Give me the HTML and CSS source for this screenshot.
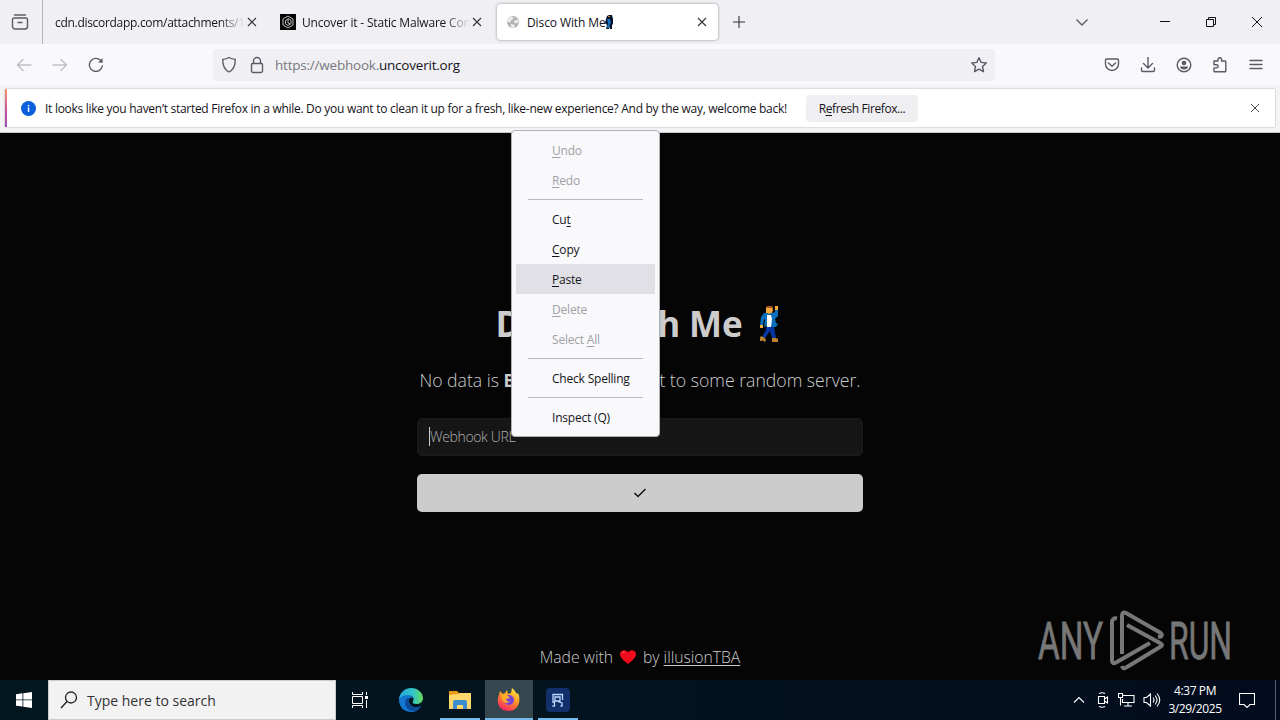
FILE: index.html
```html
<!DOCTYPE html>
<html lang="en">
<head>
    <meta charset="UTF-8">
    <meta name="viewport" content="width=device-width, initial-scale=1.0">
    <title>Disco With Me</title>
    <link rel="stylesheet" href="styles.css">
</head>
<body>
<div class="screen">
    <header class="tabs">
        <div class="view">
            <svg class="icon" width="18" height="18" viewBox="0 0 18 18"><path d="M3.5 2h11M3 5h12a1.5 1.5 0 0 1 1.5 1.5v7A2.5 2.5 0 0 1 14 16H4a2.5 2.5 0 0 1-2.5-2.500v-7A1.5 1.5 0 0 1 3 5zM7 9.5h4"/></svg>
        </div>
        <div class="tab">
            <span class="tab-text fade t1">cdn.discordapp.com/attachments/1353</span>
            <svg class="close" width="10" height="10" viewBox="0 0 10 10"><path d="M1 1l8 8M9 1l-8 8"/></svg>
        </div>
        <div class="tab">
            <svg class="favicon" width="16" height="16" viewBox="0 0 16 16"><path fill="#050505" d="M0 0h16v16H0z"/><path fill="none" stroke="#bbb" d="M8 2l5 3v6l-5 3-5-3V5zM8 4.500l3 1.700v3.600l-3 1.700-2.500-1.500V6.500L8 5v4l2 1"/></svg>
            <span class="tab-text fade t2">Uncover it - Static Malware Config</span>
            <svg class="close" width="10" height="10" viewBox="0 0 10 10"><path d="M1 1l8 8M9 1l-8 8"/></svg>
        </div>
        <div class="tab active">
            <svg class="favicon" width="16" height="16" viewBox="0 0 16 16"><circle cx="8" cy="8" r="6" fill="#b4b4b4"/><path fill="#eee" d="M3 4.500l4-2 1.500 2-2.500 2-1 2-3-1zM9 7l4-1.500.5 3-3.500 1zM6 10l3 .5 1 2-2 1.500-2-1.500z"/></svg>
            <span class="tab-text t3">Disco With Me</span>
            <svg class="mini-man" width="9" height="14" viewBox="0 0 9 14"><path fill="#06152d" d="M2 1l2-1h3l1 4v5l-1 1v4H5v-3l-1 3H1l1-4-2-2 1-4z"/><path fill="#1470bd" d="M2 4h3l1 4-1 1-1 4H2l1-5z"/><path fill="#c98a35" d="M3 1h2v1H3z"/></svg>
            <svg class="close" width="10" height="10" viewBox="0 0 10 10"><path d="M1 1l8 8M9 1l-8 8"/></svg>
        </div>
        <svg class="plus" width="12" height="12" viewBox="0 0 12 12"><path d="M6 0v12M0 6h12"/></svg>
        <div class="window-btns">
            <svg class="chevron" width="14" height="14" viewBox="0 0 14 14"><path d="M1.500 4.500L7 10l5.500-5.500"/></svg>
            <svg width="12" height="12" viewBox="0 0 12 12"><path d="M1 5.500h10"/></svg>
            <svg width="12" height="12" viewBox="0 0 12 12"><path d="M1.500 3.500h7v7h-7zM3.500 3.500v-2h7v7h-2"/></svg>
            <svg width="12" height="12" viewBox="0 0 12 12"><path d="M1 1l10 10M11 1L1 11"/></svg>
        </div>
    </header>

    <nav class="toolbar">
        <div class="nav-btns">
            <svg class="icon off" width="16" height="16" viewBox="0 0 16 16"><path d="M15 8H1.500M7 2.500L1.500 8 7 13.500"/></svg>
            <svg class="icon off" width="16" height="16" viewBox="0 0 16 16"><path d="M1 8h13.500M9 2.500L14.500 8 9 13.500"/></svg>
            <svg class="icon" width="16" height="16" viewBox="0 0 16 16"><path d="M14.300 9A6.500 6.500 0 1 1 12.500 3.300L14 5"/><path d="M14.500 1v4.500H10z" fill="#5b5b66" stroke="none"/></svg>
        </div>
        <div class="urlbar">
            <svg class="icon" width="16" height="18" viewBox="0 0 16 18"><path d="M8 1.500c2 1.300 4.300 1.700 6.300 1.900 0 6-1.500 10.100-6.300 12.600C3.200 13.500 1.700 9.400 1.700 3.400 3.700 3.200 6 2.800 8 1.500z"/></svg>
            <svg class="icon" width="14" height="18" viewBox="0 0 14 18"><path d="M2.500 7.500h9a1 1 0 0 1 1 1v6.500a1.500 1.500 0 0 1-1.500 1.500H3A1.500 1.500 0 0 1 1.500 15V8.500a1 1 0 0 1 1-1zM3.500 7.500V5a3.500 3.500 0 0 1 7 0v2.500"/></svg>
            <span class="url">https://webhook.<b>uncoverit.org</b></span>
            <svg class="icon star" width="18" height="18" viewBox="0 0 18 18"><path d="M9 1.700l2.200 4.700 5.100.6-3.800 3.500 1 5.200L9 13.200l-4.500 2.500 1-5.200L1.700 7l5.100-.6z"/></svg>
        </div>
        <div class="tools">
            <svg class="icon" width="16" height="16" viewBox="0 0 16 16"><path d="M2.500 2h11a1 1 0 0 1 1 1v4a6.500 6.500 0 0 1-13 0V3a1 1 0 0 1 1-1zM4.500 6L8 9.200 11.500 6"/></svg>
            <svg class="icon" width="16" height="16" viewBox="0 0 16 16"><path d="M8 0v10.500M3.500 6.500L8 11l4.500-4.500M1.500 11v2A1.500 1.500 0 0 0 3 14.500h10a1.500 1.500 0 0 0 1.500-1.500v-2"/></svg>
            <svg class="icon" width="16" height="16" viewBox="0 0 16 16"><circle cx="8" cy="8" r="6.800"/><circle cx="8" cy="6" r="2.300" fill="#5b5b66" stroke="none"/><path d="M4 9.500h8c0 4-8 4-8 0z" fill="#5b5b66" stroke="none"/></svg>
            <svg class="icon" width="16" height="16" viewBox="0 0 16 16"><path d="M2 4h4V2.500a1.800 1.800 0 0 1 3.600 0V4H13a.8.8 0 0 1 .8.800v9.100a.8.8 0 0 1-.8.800H2.800a.8.8 0 0 1-.8-.8v-3h2.500a1.600 1.600 0 0 0 0-3.200H2z"/></svg>
            <svg class="icon" width="16" height="16" viewBox="0 0 16 16"><path d="M2 3.500h12M2 7.500h12M2 11.500h12"/></svg>
        </div>
    </nav>

    <div class="notice-wrap">
        <div class="notice">
            <svg width="15" height="15" viewBox="0 0 15 15"><circle cx="7.500" cy="7.500" r="7.500" fill="#0a5fdc"/><path fill="#fff" d="M6.800 6.500h1.500V11H6.800zM6.800 4h1.500v1.500H6.800z"/></svg>
            <span class="notice-text">It looks like you haven’t started Firefox in a while. Do you want to clean it up for a fresh, like-new experience? And by the way, welcome back!</span>
            <button class="refresh">R<u>e</u>fresh Firefox...</button>
            <svg class="close" width="10" height="10" viewBox="0 0 10 10"><path d="M1 1l8 8M9 1l-8 8"/></svg>
        </div>
    </div>

    <main class="page">
        <h1 class="title"><span>Disco With Me</span>
            <svg width="22" height="38" viewBox="0 0 22 38"><path fill="#f7a93a" d="M8 2h6l1 3-1 3-3 1-3-1zM17 1h3v4h-3zM2 20h3v3H2z"/><path fill="#a8541c" d="M8 3l1-2h5l1 2z"/><path fill="#0b6fbb" d="M17 5h3v6l-3 3 1 4 2 1-2 3h-4l-1-1H9l-3 1 1-7-1-1-1 6H2l1-8 3-4h3l2 1 3-1 3-1z"/><path fill="#fff" d="M9 10h4l1 4-1 8H9z"/><path fill="#0636a1" d="M8 22h8l1 6 1 5h-4l-2-7-5 7-3-1 4-7z"/><path fill="#bd832c" d="M3 31l4 2 1 3-2 1-1-2-1 1H2v-3zM14 33h4l2 1v3h-6z"/></svg>
        </h1>
        <p class="lead">No data is <b>BEING</b> logged / sent to some random server.</p>
        <div class="field"><span class="caret"></span><span class="placeholder">Webhook URL</span></div>
        <button class="submit">
            <svg width="14" height="12" viewBox="0 0 14 12"><path d="M1.500 6l3.500 3.500L12.500 2"/></svg>
        </button>
        <footer class="made">
            <span>Made with</span>
            <svg width="18" height="16" viewBox="0 0 18 16"><path fill="#f00c1d" d="M9 15C4 11 1 8.500 1 5c0-4 6-5 8-1.500C11 0 17 1 17 5c0 3.500-3 6-8 10z"/><path fill="#ff6571" d="M3 4.500C3.500 2.500 6 2.500 6.500 3.500 5 3.500 4 4 3 4.500z"/></svg>
            <span>by <u>illusionTBA</u></span>
        </footer>
        <svg class="watermark" width="204" height="70" viewBox="1035 605 204 70">
            <text x="1038" y="659" textLength="65" lengthAdjust="spacingAndGlyphs">ANY</text>
            <text x="1169" y="659" textLength="63" lengthAdjust="spacingAndGlyphs">RUN</text>
            <path d="M1117 618.500q-5-1-5 4v38q0 4 4 2l34-19.500M1122 654v-38q0-5 4-3l34 19.500q3 2 1 4l-3 .5M1127 625l33 18q4 2 0 4l-33 20q-4 3-5-1"/>
        </svg>
    </main>

    <div class="taskbar">
        <div class="start"><svg width="16" height="16" viewBox="0 0 16 16"><path fill="#fff" d="M0 2.200l6.500-.9v6.200H0zM7.300 1.200L16 0v7.500H7.300zM0 8.300h6.500v6.300L0 13.700zM7.300 8.300H16V16l-8.700-1.200z"/></svg></div>
        <div class="search">
            <svg width="18" height="18" viewBox="0 0 18 18"><circle cx="11" cy="6.500" r="5.500"/><path d="M7 10.500L1 17"/></svg>
            <span>Type here to search</span>
        </div>
        <div class="apps">
            <div class="app task-view"><svg width="18" height="16" viewBox="0 0 18 16"><path fill="none" stroke="#fff" d="M1.500 0v2.500h10V0M1.500 4.500h10v7h-10zM1.500 16v-2.500h10V16M15.500 0v3M15.500 8v8"/><path fill="#fff" d="M14 4h3v3h-3z"/></svg></div>
            <div class="app"><svg width="24" height="24" viewBox="0 0 24 24">
                <defs><linearGradient id="edge" x1="0" x2="1"><stop offset="0" stop-color="#23a7dc"/><stop offset=".6" stop-color="#31c5c5"/><stop offset="1" stop-color="#6add58"/></linearGradient></defs>
                <path fill="#1477cf" d="M0 12C0 6 6 3 11 6l4 5c-3-3-6 0-5 3 1 5 7 7 12 4-2 4-6 6-10 6C5 24 0 19 0 12z"/>
                <path fill="url(#edge)" d="M0 11C1 4 6 0 12 0c7 0 12 5 12 10 0 4-3 6-7 6-3 0-4-1-3-3 2-3-1-6-5-6-4 0-7 2-9 4z"/>
                <path fill="#0d4b99" d="M8 10c-4 5-1 12 5 13 4 0 7-2 9-5-5 3-13 1-12-5 0-1 0-2 1-3z"/></svg></div>
            <div class="app open"><svg width="22" height="20" viewBox="0 0 22 20"><path fill="#eb9b17" d="M0 1h8l2 2h12v4H0z"/><path fill="#ffd76b" d="M0 5l9-1 2-1h11v16H0z"/><path fill="#3b8fd0" d="M4 19v-7q0-2 2-2h10q2 0 2 2v7h-4v-4H8v4z"/></svg></div>
            <div class="app open current"><svg width="24" height="24" viewBox="0 0 24 24">
                <defs><linearGradient id="fox" x1=".8" x2=".3" y2="1"><stop offset="0" stop-color="#fff04a"/><stop offset=".45" stop-color="#ff9824"/><stop offset="1" stop-color="#f52364"/></linearGradient></defs>
                <path fill="url(#fox)" d="M3 3l3 3 2-1 2-3 1 4 3-1 1-5c3 2 4 5 5 6l1-1c4 9-1 18-9 18C3 23 0 17 1 10z"/><circle cx="12" cy="12" r="5" fill="#7944d8"/><path fill="#ffad2b" d="M4 7c2-2 5-1 7 1l2 2-4 1c0 2 2 3 4 2-3 4-8 1-8-3z"/></svg></div>
            <div class="app open"><svg width="24" height="24" viewBox="0 0 24 24"><rect width="24" height="24" rx="4" fill="#122f6c"/><path fill="none" stroke="#bfd7ff" stroke-width="1.300" d="M7 13V6.500h9.500V12M9 9h5v4H9zM7 12v3M8.500 13v5.500M12 13.500l4 1.500v3.500M6.500 18h2M14.500 18h2"/></svg></div>
        </div>
        <div class="tray">
            <svg class="up" width="12" height="16" viewBox="0 0 12 16"><path d="M1 10.500l5-5 5 5"/></svg>
            <svg width="14" height="16" viewBox="0 0 14 16"><path d="M2.500 4.500h6v7h-6zM8.500 7l3-2v6l-3-2M3 1.500q3-1.500 6 0M3 14.500q3 1.500 6 0"/></svg>
            <svg width="17" height="16" viewBox="0 0 17 16"><path d="M5 3.500h11v7H4.500V7M.5 1.500h4v4h-4zM2.500 5.500v8M10 10.500v3M6 14h8"/></svg>
            <svg width="18" height="16" viewBox="0 0 18 16"><path d="M1 5.500h2.500l4-3.500v12l-4-3.500H1zM10 5.500q2 2.500 0 5M12 3.500q4 4.500 0 9M14 1.500q5.500 6.500 0 13"/></svg>
            <div class="clock"><span>4:37 PM</span><span>3/29/2025</span></div>
            <svg width="16" height="16" viewBox="0 0 16 16"><path d="M.5 1.500h15v11H11l-3 3-3-3H.5z"/></svg>
        </div>
    </div>

    <div class="menu">
        <div class="item off"><u>U</u>ndo</div>
        <div class="item off"><u>R</u>edo</div>
        <div class="sep"></div>
        <div class="item">Cu<u>t</u></div>
        <div class="item"><u>C</u>opy</div>
        <div class="item hover"><u>P</u>aste</div>
        <div class="item off"><u>D</u>elete</div>
        <div class="item off">Select <u>A</u>ll</div>
        <div class="sep"></div>
        <div class="item">Check Spelling</div>
        <div class="sep"></div>
        <div class="item">Inspect (Q)</div>
    </div>
</div>
</body>
</html>
```
FILE: styles.css
```css
*, *::before, *::after{
    box-sizing: border-box;
    padding: 0;
    margin: 0;
    font-family: 'Open Sans', 'Noto Sans', sans-serif;
}

.screen{
    width: 1280px;
    height: 720px;
    display: flex;
    flex-direction: column;
    overflow: hidden;
    position: relative;
    font-size: 12px;
    color: #15141a;
}

svg{
    flex: none;
    display: block;
}

.icon{
    fill: none;
    stroke: #5b5b66;
    stroke-width: 1.4;
    stroke-linejoin: round;
    stroke-linecap: round;
}

.icon.off{
    stroke: #bfbfc5;
}

.close, .plus, .window-btns svg{
    fill: none;
    stroke: #333;
    stroke-width: 1.1;
}

/* tab strip */
.tabs{
    height: 44px;
    flex: none;
    display: flex;
    align-items: center;
    gap: 4px;
    background-color: #f0f0f4;
}

.view{
    width: 43px;
    height: 44px;
    display: flex;
    align-items: center;
    padding-left: 11px;
    border-right: 1px solid #b5b5bb;
}

.tab{
    width: 221px;
    height: 36px;
    display: flex;
    align-items: center;
    padding: 0 11px 0 8px;
    border-radius: 4px;
}

.tab.active{
    background-color: #fff;
    box-shadow: 0 0 3px rgba(0, 0, 0, .4);
}

.favicon{
    margin-right: 6px;
}

.tab-text{
    white-space: nowrap;
    overflow: hidden;
}

.fade{
    flex: 1;
    margin-right: 2px;
    -webkit-mask-image: linear-gradient(to left, transparent, #000 26px);
    mask-image: linear-gradient(to left, transparent, #000 26px);
}

.t1{
    letter-spacing: -.3px;
}

.t2{
    letter-spacing: -.18px;
}

.t3{
    letter-spacing: -.1px;
}

.mini-man{
    margin-left: -1px;
}

.tab .close{
    margin-left: auto;
}

.plus{
    margin-left: 11px;
}

.window-btns{
    margin-left: auto;
    display: flex;
    align-items: center;
    gap: 34px;
    padding-right: 17px;
}

.window-btns svg{
    stroke: #111;
    stroke-width: 1;
}

.window-btns .chevron{
    stroke: #5b5b66;
    stroke-width: 1.4;
    margin-right: 36px;
}

/* toolbar */
.toolbar{
    height: 41px;
    flex: none;
    display: flex;
    align-items: center;
    background-color: #f9f9fb;
}

.nav-btns{
    width: 213px;
    display: flex;
    gap: 20px;
    padding-left: 16px;
}

.urlbar{
    width: 782px;
    height: 32px;
    display: flex;
    align-items: center;
    padding: 0 7px 0 8px;
    background-color: #f0f0f4;
    border-radius: 3px;
}

.urlbar .icon + .icon{
    margin-left: 13px;
}

.url{
    margin-left: 11px;
    font-size: 13.5px;
    letter-spacing: -.22px;
    color: #77777f;
}

.url b{
    font-weight: normal;
    color: #15141a;
}

.star{
    margin-left: auto;
}

.tools{
    margin-left: auto;
    display: flex;
    gap: 20px;
    padding-right: 16px;
}

/* notification bar */
.notice-wrap{
    height: 48px;
    flex: none;
    padding: 4px 5px 5px;
    background-color: #f5f5f7;
    border-bottom: 1px solid #c8c8cc;
}

.notice{
    height: 38px;
    display: flex;
    align-items: center;
    padding: 0 15px 0 14px;
    background-color: #fff;
    border-left: 2px solid;
    border-image: linear-gradient(#f59b6c, #d2559a, #8e4bb5) 1;
    box-shadow: 0 0 2px rgba(0, 0, 0, .3);
}

.notice-text{
    width: 743px;
    margin-left: 9px;
    white-space: nowrap;
    letter-spacing: -.283px;
}

.refresh{
    width: 112px;
    height: 27px;
    margin-left: 18px;
    border: none;
    border-radius: 4px;
    background-color: #efeff1;
    font-size: 12px;
    letter-spacing: -.4px;
    color: #15141a;
}

.notice .close{
    margin-left: auto;
    stroke-width: .9;
}

/* page */
.page{
    height: 547px;
    flex: none;
    display: flex;
    flex-direction: column;
    align-items: center;
    padding-top: 166px;
    background-color: #050505;
    color: #ccc;
    position: relative;
}

.title{
    height: 50px;
    display: flex;
    align-items: center;
    gap: 15px;
    padding-right: 5px;
    font-size: 35px;
    line-height: 50px;
    letter-spacing: -.08px;
    white-space: nowrap;
}

.lead{
    margin-top: 18px;
    font-size: 17.67px;
    line-height: 26px;
    font-weight: 300;
    white-space: nowrap;
}

.lead b{
    font-weight: 700;
}

.field{
    width: 446px;
    height: 38px;
    margin-top: 25px;
    display: flex;
    align-items: center;
    padding: 0 0 1px 11px;
    background-color: #161616;
    border: 1px solid #1b1b1b;
    border-radius: 5px;
}

.caret{
    width: 1px;
    height: 19px;
    background-color: #ccc;
}

.placeholder{
    font-size: 14px;
    font-weight: 300;
    letter-spacing: -.35px;
    color: #b0b0b0;
}

.submit{
    width: 446px;
    height: 38px;
    margin-top: 18px;
    display: grid;
    place-content: center;
    border: none;
    border-radius: 5px;
    background-color: #ccc;
}

.submit svg{
    fill: none;
    stroke: #111;
    stroke-width: 1.5;
}

.made{
    margin-top: 132px;
    display: flex;
    align-items: center;
    gap: 6px;
    font-size: 15.7px;
    line-height: 26px;
    font-weight: 300;
}

u{
    text-underline-offset: 2px;
    text-decoration-thickness: 1px;
    text-decoration-skip-ink: none;
}

.watermark{
    position: absolute;
    left: 1035px;
    top: 472px;
    fill: #777;
}

.watermark text{
    font-family: Roboto, sans-serif;
    font-size: 52px;
    stroke: #777;
    stroke-width: .8;
}

.watermark path{
    fill: none;
    stroke: #777;
    stroke-width: 4;
    stroke-linejoin: round;
}

/* taskbar */
.taskbar{
    height: 40px;
    flex: none;
    display: flex;
    background: linear-gradient(90deg, #03171f, #03131f 50%, #020b1d);
    color: #fff;
}

.start{
    width: 48px;
    display: grid;
    place-content: center;
}

.search{
    width: 288px;
    display: flex;
    align-items: center;
    gap: 9px;
    padding-left: 11px;
    background-color: #f2f2f2;
    border: 1px solid #ccc;
    font-size: 14px;
    color: #333;
}

.search svg{
    fill: none;
    stroke: #222;
    stroke-width: 1.3;
}

.apps{
    display: flex;
    gap: 1px;
}

.app{
    width: 48px;
    height: 40px;
    display: grid;
    place-content: center;
    position: relative;
}

.app.task-view{
    margin-right: 2px;
}

.app.open::after{
    content: '';
    position: absolute;
    left: 4px;
    right: 4px;
    bottom: 0;
    height: 2px;
    background-color: #76b9ed;
}

.app.current{
    background-color: #34464e;
}

.app.current::after{
    left: 0;
    right: 0;
}

.tray{
    margin-left: auto;
    margin-right: 4px;
    padding-right: 20px;
    display: flex;
    align-items: center;
    gap: 8px;
    border-right: 1px solid #59616b;
}

.tray svg{
    fill: none;
    stroke: #fff;
    stroke-width: 1.1;
}

.tray .up{
    margin-right: 3px;
}

.clock{
    width: 52px;
    margin-right: 10px;
    display: flex;
    flex-direction: column;
    align-items: center;
    font-size: 12px;
    line-height: 18px;
    letter-spacing: -.4px;
}

/* context menu */
.menu{
    position: absolute;
    left: 511px;
    top: 130px;
    width: 149px;
    height: 307px;
    padding: 4px;
    background-color: #f9f9fb;
    border: 1px solid #b0b0b5;
    border-radius: 4px;
}

.item{
    height: 30px;
    padding: 1px 0 0 36px;
    line-height: 30px;
    letter-spacing: -.2px;
    white-space: nowrap;
}

.item.off{
    color: #a0a0a5;
}

.item.hover{
    background-color: #e0e0e6;
}

.sep{
    height: 1px;
    margin: 4px 12px;
    background-color: #b8b8be;
}
```
